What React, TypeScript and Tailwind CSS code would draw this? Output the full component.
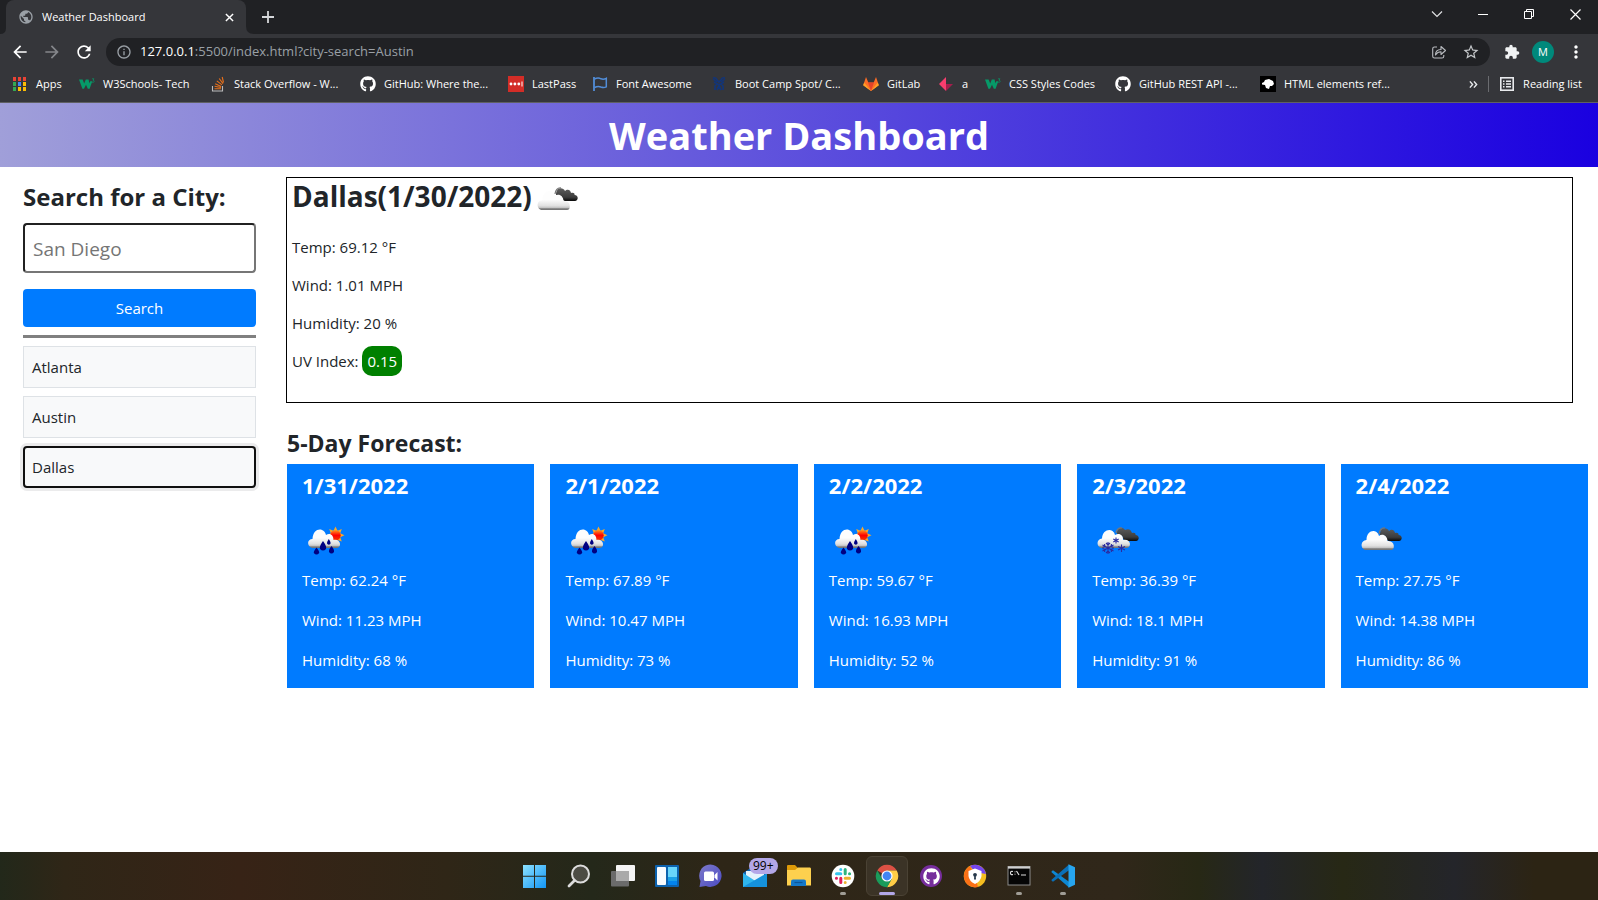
import type { ReactNode } from "react";
import {
  MdArrowBack,
  MdArrowForward,
  MdExtension,
  MdInfoOutline,
  MdMoreVert,
  MdPublic,
  MdRefresh,
  MdStarBorder,
} from "react-icons/md";
import { FaGithub } from "react-icons/fa";

/* ---------- bookmark icons ---------- */

const appColors = [
  "#ea4335", "#ea4335", "#ea4335",
  "#34a853", "#4285f4", "#fbbc05",
  "#34a853", "#fbbc05", "#fbbc05",
];

function AppsIcon() {
  return (
    <svg width="16" height="16" viewBox="0 0 16 16" aria-hidden="true">
      {appColors.map((color, i) => (
        <rect key={i} x={1 + (i % 3) * 5} y={1 + Math.floor(i / 3) * 5} width="3" height="4" fill={color} />
      ))}
    </svg>
  );
}

function W3Icon() {
  return (
    <svg width="16" height="16" viewBox="0 0 16 16" fill="none" aria-hidden="true">
      <path d="M0 3.500H3.600L5.200 7.600L6.800 3.500H9.600L10.300 7.200L11.300 5.200H13.300L10.600 12.800H8.800L7 8.800L5 12.800H3.400Z" fill="#069a68" />
      <path d="M13 2.800H15L14 4.200Q15.500 4.500 15.200 5.700Q14.400 6.700 13 6.100" stroke="#069a68" strokeWidth="0.700" />
    </svg>
  );
}

function StackIcon() {
  return (
    <svg width="16" height="16" viewBox="0 0 16 16" fill="none" aria-hidden="true">
      <path d="M2.500 10V15H12.500V10" stroke="#bcbbbb" strokeWidth="1.100" />
      <path d="M4.500 12.800H11M4.600 10.300L11 11.500M5.200 7.700L11.200 10.400M6.800 4.900L12 8.900M9.200 2.500L13 7.600M12.200 1L13.500 6.500" stroke="#e8701a" strokeWidth="1.100" />
    </svg>
  );
}

function LastPassIcon() {
  return (
    <svg width="16" height="16" viewBox="0 0 16 16" aria-hidden="true">
      <rect width="16" height="16" fill="#d32d27" />
      <circle cx="3" cy="8" r="1.400" fill="#fff" />
      <circle cx="6.900" cy="8" r="1.400" fill="#fff" />
      <circle cx="10.800" cy="8" r="1.400" fill="#fff" />
      <rect x="13.500" y="5.500" width="1" height="5" fill="#fff" />
    </svg>
  );
}

function FlagIcon() {
  return (
    <svg width="16" height="16" viewBox="0 0 16 16" fill="none" stroke="#528dd7" aria-hidden="true">
      <path d="M2 1V15" strokeWidth="1.800" />
      <path d="M2.500 3C5.500 1.500 7.500 2 9 2.800C11 3.600 13 3 14.300 2.300V10.800C12 12 10.500 11.600 8.800 11C6.500 10 4.500 10.600 2.500 11.500" strokeWidth="1.500" />
    </svg>
  );
}

function BootcampIcon() {
  return (
    <svg width="16" height="16" viewBox="0 0 16 16" fill="none" stroke="#133578" aria-hidden="true">
      <path d="M2 2Q5 1 6 4L8 6L10 4Q11 1 14 2M3 6L8 9L13 6M4 14V10L6 8M12 14V10L10 8M6 14L8 10L10 14" strokeWidth="1.700" />
      <path d="M2 3L6 6M14 3L10 6M6 12H10" strokeWidth="1.500" />
    </svg>
  );
}

function GitlabIcon() {
  return (
    <svg width="16" height="16" viewBox="0 0 16 16" aria-hidden="true">
      <path d="M8 15L0.200 9.200L3 1L5.300 6.500H10.700L13 1L15.800 9.200Z" fill="#fc6d26" />
      <path d="M8 15L5 6.500H11Z" fill="#e24329" />
      <path d="M8 15L0.200 9.200L1.200 6.500ZM8 15L15.800 9.200L14.800 6.500Z" fill="#fca326" />
    </svg>
  );
}

function PinkIcon() {
  return (
    <svg width="16" height="16" viewBox="0 0 16 16" aria-hidden="true">
      <path d="M8 1V15L1 8Z" fill="#f83e6e" />
      <path d="M8 8H15L8 15Z" fill="#a51e4d" />
    </svg>
  );
}

function HtmlRefIcon() {
  return (
    <svg width="16" height="16" viewBox="0 0 16 16" aria-hidden="true">
      <rect width="16" height="16" fill="#000" />
      <path d="M2 7L4 6L5 4L9 3L13 5L14 8L12 10H10L9 13L6 12L5 9L2 8.500Z" fill="#fff" />
    </svg>
  );
}

function ReadingIcon() {
  return (
    <svg width="16" height="16" viewBox="0 0 16 16" fill="none" stroke="#e8eaed" aria-hidden="true">
      <rect x="1.800" y="1.800" width="12.400" height="12.400" strokeWidth="1.600" />
      <path d="M4 5.200H5.500M7 5.200H12M4 8H5.500M7 8H12M4 10.800H5.500M7 10.800H12" strokeWidth="1.500" />
    </svg>
  );
}

type Bookmark = { label: string; icon: ReactNode; width: string };

const github = <FaGithub size={16} className="text-white" />;

const bookmarks: Bookmark[] = [
  { label: "Apps", icon: <AppsIcon />, width: "w-[67px]" },
  { label: "W3Schools- Tech", icon: <W3Icon />, width: "w-[131px]" },
  { label: "Stack Overflow - W...", icon: <StackIcon />, width: "w-[150px]" },
  { label: "GitHub: Where the...", icon: github, width: "w-[148px]" },
  { label: "LastPass", icon: <LastPassIcon />, width: "w-[84px]" },
  { label: "Font Awesome", icon: <FlagIcon />, width: "w-[119px]" },
  { label: "Boot Camp Spot/ C...", icon: <BootcampIcon />, width: "w-[152px]" },
  { label: "GitLab", icon: <GitlabIcon />, width: "w-[75px]" },
  { label: "a", icon: <PinkIcon />, width: "w-[47px]" },
  { label: "CSS Styles Codes", icon: <W3Icon />, width: "w-[130px]" },
  { label: "GitHub REST API -...", icon: github, width: "w-[145px]" },
  { label: "HTML elements ref...", icon: <HtmlRefIcon />, width: "w-[148px]" },
];

/* ---------- browser chrome ---------- */

function TabStrip() {
  return (
    <div className="flex h-[34px] items-stretch bg-[#202124]">
      <svg width="6" height="34" viewBox="0 0 6 34" aria-hidden="true">
        <path d="M6 28Q6 34 0 34H6Z" fill="#35363a" />
      </svg>
      <div className="flex w-60 items-center rounded-t-lg bg-[#35363a] pr-2 pl-3">
        <MdPublic size={16} className="text-[#9aa0a6]" />
        <span className="ml-2 flex-1 text-[11px] text-white">Weather Dashboard</span>
        <button aria-label="Close tab" className="p-1">
          <svg width="9" height="9" viewBox="0 0 10 10" stroke="#fff" strokeWidth="1.600" aria-hidden="true">
            <path d="M1 1L9 9M9 1L1 9" />
          </svg>
        </button>
      </div>
      <svg width="8" height="34" viewBox="0 0 8 34" aria-hidden="true">
        <path d="M0 26Q0 34 8 34H0Z" fill="#35363a" />
      </svg>
      <button aria-label="New tab" className="ml-2 flex items-center">
        <svg width="12" height="12" viewBox="0 0 12 12" stroke="#d5d7da" strokeWidth="1.800" aria-hidden="true">
          <path d="M6 0V12M0 6H12" />
        </svg>
      </button>
      <div className="ml-auto flex h-7">
        <button aria-label="Search tabs" className="flex w-[46px] items-center justify-center">
          <svg width="12" height="12" viewBox="0 0 12 12" fill="none" stroke="#e0e1e3" strokeWidth="1.200" aria-hidden="true">
            <path d="M1 3.500L6 8.500L11 3.500" />
          </svg>
        </button>
        <button aria-label="Minimize" className="flex w-[46px] items-center justify-center">
          <svg width="10" height="10" viewBox="0 0 10 10" fill="#fff" aria-hidden="true">
            <rect y="5" width="10" height="1" />
          </svg>
        </button>
        <button aria-label="Restore" className="flex w-[46px] items-center justify-center">
          <svg width="10" height="10" viewBox="0 0 10 10" fill="none" stroke="#fff" aria-hidden="true">
            <path d="M0.500 2.500H7.500V9.500H0.500ZM2.500 2.500V0.500H9.500V7.500H7.500" />
          </svg>
        </button>
        <button aria-label="Close" className="flex w-[46px] items-center justify-center">
          <svg width="11" height="11" viewBox="0 0 11 11" stroke="#fff" strokeWidth="1.200" aria-hidden="true">
            <path d="M0.500 0.500L10.500 10.500M10.500 0.500L0.500 10.500" />
          </svg>
        </button>
      </div>
    </div>
  );
}

function Toolbar() {
  return (
    <div className="flex h-9 items-center bg-[#35363a] pr-3 pl-2.5">
      <button aria-label="Back" className="text-white"><MdArrowBack size={20} /></button>
      <button aria-label="Forward" className="ml-3 text-[#85878b]"><MdArrowForward size={20} /></button>
      <button aria-label="Reload" className="ml-3 text-white"><MdRefresh size={20} /></button>
      <div className="ml-3 flex h-7 flex-1 items-center rounded-full bg-[#202124] pr-2.5 pl-2.5">
        <MdInfoOutline size={16} className="text-[#9aa0a6]" />
        <span className="ml-2 flex-1 text-[13px] text-[#9aa0a6]">
          <span className="text-white">127.0.0.1</span>:5500/index.html?city-search=Austin
        </span>
        <button aria-label="Share">
          <svg width="16" height="16" viewBox="0 0 16 16" fill="none" stroke="#b9bcc0" strokeWidth="1.100" aria-hidden="true">
            <path d="M6 3H3.500Q1.700 3 1.700 4.800V12.200Q1.700 14 3.500 14H11Q12.800 14 12.800 12.200V11" />
            <path d="M4.500 11Q4.500 5.500 10 5.500V2.500L14.500 6.500L10 10.500V7.800Q6.500 7.800 4.500 11Z" strokeLinejoin="round" />
          </svg>
        </button>
        <button aria-label="Bookmark this page" className="ml-[15px] text-[#c4c7ca]"><MdStarBorder size={18} /></button>
      </div>
      <button aria-label="Extensions" className="ml-3.5 text-[#f1f3f4]"><MdExtension size={16} /></button>
      <button aria-label="Profile" className="ml-3 size-[22px] rounded-full bg-[#00897b] text-[11px] leading-[22px] text-white">M</button>
      <button aria-label="Menu" className="ml-3 text-white"><MdMoreVert size={20} /></button>
    </div>
  );
}

function Bookmarks() {
  return (
    <nav className="flex h-[33px] items-center border-b border-[#5f6063] bg-[#35363a] pb-1 pl-3 text-[11px] text-white">
      {bookmarks.map((b, i) => (
        <a key={i} href="#" className={`flex shrink-0 items-center gap-2 whitespace-nowrap ${b.width}`}>
          <span className="flex w-4 justify-center">{b.icon}</span>
          {b.label}
        </a>
      ))}
      <button aria-label="More bookmarks" className="ml-auto">
        <svg width="9" height="9" viewBox="0 0 10 10" fill="none" stroke="#e8eaed" strokeWidth="1.600" aria-hidden="true">
          <path d="M1 1.500L4 5L1 8.500M5.500 1.500L8.500 5L5.500 8.500" />
        </svg>
      </button>
      <span className="ml-2.5 h-4 w-px bg-[#6b6c70]" />
      <a href="#" className="mr-4 ml-2.5 flex items-center gap-2">
        <ReadingIcon />
        Reading list
      </a>
    </nav>
  );
}

/* ---------- weather icons ---------- */

type Sky = "clouds" | "rain" | "snow";

function WeatherIcon({ sky, id }: { sky: Sky; id: string }) {
  const white = `${id}-white`;
  const dark = `${id}-dark`;
  const sun = `${id}-sun`;
  return (
    <svg width="50" height="50" viewBox="0 0 50 50" role="img" aria-label={sky}>
      <defs>
        <linearGradient id={white} x1="0" y1="0" x2="0" y2="1">
          <stop offset="0.450" stopColor="#fdfdfd" />
          <stop offset="0.780" stopColor="#e0e0e0" />
          <stop offset="0.900" stopColor="#bdbdbd" />
          <stop offset="0.930" stopColor="#777" />
          <stop offset="1" stopColor="#777" />
        </linearGradient>
        <linearGradient id={dark} x1="0" y1="0" x2="0" y2="1">
          <stop offset="0" stopColor="#5c5c5c" />
          <stop offset="0.700" stopColor="#3c3c3c" />
          <stop offset="1" stopColor="#080808" />
        </linearGradient>
        <linearGradient id={sun} x1="0" y1="0" x2="0" y2="1">
          <stop offset="0" stopColor="#ff9a1e" />
          <stop offset="0.500" stopColor="#f00" />
          <stop offset="1" stopColor="#f03a00" />
        </linearGradient>
      </defs>
      {sky === "clouds" && (
        <g>
          <path d="M24 20C24 12 31 12 33 16C36 13 39 16 39 18C42 17 43 19 42.500 20C47 20 46.500 26 43 26H33C31 26 30 23 29 21Z" fill={`url(#${dark})`} />
          <path d="M23 19Q24 12.500 29 13" fill="none" stroke="#777" strokeWidth="1.200" />
          <path d="M9 35C4 33 4.500 25.500 10.500 25C10.500 17 16.500 14.500 20.500 17Q22.500 18.500 23 21C26.500 18 31.500 21 31.500 26C39 25 39.500 35 35 35Z" fill={`url(#${white})`} />
        </g>
      )}
      {sky === "rain" && (
        <g>
          <path d="M33.500 11.500L35.500 15.700L39.800 14L38.200 18.300L42.500 20.300L38.200 22.300L39.800 26.600L35.500 24.900L33.500 29L31.500 24.900L27.200 26.600L28.800 22.300L24.500 20.300L28.800 18.300L27.200 14L31.500 15.700Z" fill="#f9a72b" />
          <circle cx="33.500" cy="20.300" r="5.200" fill={`url(#${sun})`} />
          <path d="M10 33C4.500 31 5 24 10.500 24C11 16 16 13.500 20 15Q23 16 24 20C28 17.500 31.500 20 31.500 25C39 23.500 40 32.500 35 33Z" fill={`url(#${white})`} />
          <path d="M14.500 32.500Q17.500 36 17.200 38Q14.500 41 11.800 38Q11.500 36 14.500 32.500ZM21 26Q25 31.500 24 34Q21 37 18 34Q17 31.500 21 26ZM29.500 31Q32.500 34.500 32 37Q29.500 40 27 37Q26.500 34.500 29.500 31ZM26.800 24Q29.300 27.500 28.300 29Q26.800 30.500 25.300 29Q24.300 27.500 26.800 24Z" fill="#000082" />
        </g>
      )}
      {sky === "snow" && (
        <g>
          <path d="M25 19C25 11 31 12 33 15C37 13 39 15 40 18C43 17 44 19 43.500 20C48 20 47.500 26 44 26H34C32 26 31 23 30 21Z" fill={`url(#${dark})`} />
          <path d="M24 18Q25 12.500 30 13" fill="none" stroke="#777" strokeWidth="1.200" />
          <path d="M9 33C4 31 4.500 24 10 23.500C10.500 16 16.500 13.500 20.500 16Q22.500 17.500 23 20C27.500 17.500 31.500 20.500 31 25C39.500 23.500 39.500 32.500 35 33Z" fill={`url(#${white})`} />
          <g stroke="#2b2ba0" fill="none">
            <path d="M16 27V39M10.500 30L21.500 36M21.500 30L10.500 36M14 28L16 30L18 28M14 38L16 36L18 38M10.500 32.500L13 31.500L12.500 29M21.500 33.500L19 34.500L19.500 37M19.500 29L19 31.500L21.500 32.500M12.500 37L13 34.500L10.500 33.500" strokeWidth="1.100" />
            <path d="M24 22.500V28.500M21.300 24L26.700 27M26.700 24L21.300 27M29.500 29.500V37M26 31.500L33 35M33 31.500L26 35" strokeWidth="1.100" />
          </g>
        </g>
      )}
    </svg>
  );
}

/* ---------- page ---------- */

const cities = ["Atlanta", "Austin", "Dallas"];

const forecast: { date: string; sky: Sky; temp: string; wind: string; humidity: string }[] = [
  { date: "1/31/2022", sky: "rain", temp: "62.24", wind: "11.23", humidity: "68" },
  { date: "2/1/2022", sky: "rain", temp: "67.89", wind: "10.47", humidity: "73" },
  { date: "2/2/2022", sky: "rain", temp: "59.67", wind: "16.93", humidity: "52" },
  { date: "2/3/2022", sky: "snow", temp: "36.39", wind: "18.1", humidity: "91" },
  { date: "2/4/2022", sky: "clouds", temp: "27.75", wind: "14.38", humidity: "86" },
];

function Sidebar() {
  return (
    <aside className="w-[233px] shrink-0 pt-3.5">
      <label htmlFor="city-search" className="block text-[24px] leading-8 font-bold">Search for a City:</label>
      <input
        id="city-search"
        type="text"
        placeholder="San Diego"
        className="mt-2.5 block h-[50px] w-full rounded border-2 border-t-[#212121] border-r-[#767676] border-b-[#767676] border-l-[#212121] px-2 pt-0.5 text-[19px] placeholder:text-[#757575]"
      />
      <button className="mt-4 block h-[38px] w-full rounded bg-[#007bff] text-[15px] text-white">Search</button>
      <hr className="mt-2 border-t-[3px] border-[#808080]" />
      <div className="mt-2 flex flex-col gap-2">
        {cities.map((city) => (
          <button
            key={city}
            className={
              city === "Dallas"
                ? "h-[42px] rounded border-2 border-[#101010] bg-[#f8f9fa] px-[7px] text-left text-[15px] ring-3 ring-[#ebebec]"
                : "h-[42px] border border-[#dee2e6] bg-[#f8f9fa] px-2 text-left text-[15px]"
            }
          >
            {city}
          </button>
        ))}
      </div>
    </aside>
  );
}

function Today() {
  return (
    <section className="mr-[15px] -ml-px h-[226px] border border-black pl-[5px] text-[15px] leading-[22px]">
      <h2 className="flex h-9 items-center text-[28px] font-bold">
        Dallas(1/30/2022)
        <span className="flex h-9 items-center pt-2">
          <WeatherIcon sky="clouds" id="today" />
        </span>
      </h2>
      <div className="mt-[22px] flex flex-col gap-4">
        <p>Temp: 69.12 °F</p>
        <p>Wind: 1.01 MPH</p>
        <p>Humidity: 20 %</p>
        <p>
          UV Index: <span className="rounded-[10px] bg-[#008000] px-[5px] py-[5px] text-white">0.15</span>
        </p>
      </div>
    </section>
  );
}

/* ---------- taskbar ---------- */

function TaskIcon({ children }: { children: ReactNode }) {
  return (
    <svg width="24" height="24" viewBox="0 0 24 24" fill="none" aria-hidden="true">{children}</svg>
  );
}

const tasks: { name: string; icon: ReactNode; state?: "open" | "active"; badge?: string }[] = [
  {
    name: "Start",
    icon: (
      <TaskIcon>
        <defs>
          <linearGradient id="win" x1="0" y1="0" x2="24" y2="24" gradientUnits="userSpaceOnUse">
            <stop stopColor="#8fe3ff" />
            <stop offset="1" stopColor="#0f93f5" />
          </linearGradient>
        </defs>
        <path d="M0 1H11V11.800H0ZM12 1H23V11.800H12ZM0 12.800H11V24H0ZM12 12.800H23V24H12Z" fill="url(#win)" />
      </TaskIcon>
    ),
  },
  {
    name: "Search",
    icon: (
      <TaskIcon>
        <circle cx="13.500" cy="10" r="8.500" fill="#4c4c44" stroke="#dcdcdc" strokeWidth="2" />
        <path d="M7.500 16.500L2 22" stroke="#dcdcdc" strokeWidth="2.800" strokeLinecap="round" />
      </TaskIcon>
    ),
  },
  {
    name: "Task view",
    icon: (
      <TaskIcon>
        <rect x="5" y="1" width="19" height="16" rx="1" fill="#f4f4f4" />
        <rect x="0" y="7" width="18" height="15.500" rx="1" fill="#6b6b6b" />
        <rect x="5" y="7" width="13" height="10" fill="#aaa" />
      </TaskIcon>
    ),
  },
  {
    name: "Widgets",
    icon: (
      <TaskIcon>
        <rect x="0" y="1" width="24" height="22" rx="1" fill="#0c62ae" />
        <rect x="2" y="3" width="9" height="18" rx="1" fill="#f7fbff" />
        <rect x="13" y="3" width="9" height="10" fill="#68d5fb" />
        <rect x="13" y="13" width="9" height="4" fill="#1ba1e8" />
        <rect x="13" y="17" width="9" height="4" fill="#0384ee" />
      </TaskIcon>
    ),
  },
  {
    name: "Chat",
    icon: (
      <TaskIcon>
        <defs>
          <linearGradient id="chat" x1="0" y1="0" x2="1" y2="1">
            <stop stopColor="#7d79c9" />
            <stop offset="1" stopColor="#4b4bc4" />
          </linearGradient>
        </defs>
        <path d="M0.500 23L1.500 17A11.200 11.200 0 1 1 7 22Z" fill="url(#chat)" />
        <rect x="5" y="7.500" width="10" height="9.500" rx="1.500" fill="#fff" />
        <path d="M15.500 11L18.500 8V16.500L15.500 13.500Z" fill="#fff" />
      </TaskIcon>
    ),
  },
  {
    name: "Mail",
    badge: "99+",
    icon: (
      <TaskIcon>
        <path d="M0 9L12 1L24 9V23H0Z" fill="#0f65b5" />
        <path d="M3 7H21V16L12 18L3 12Z" fill="#e4f2fb" />
        <path d="M0 9L14 18L24 23H0Z" fill="#2fb6ee" />
        <path d="M24 9L0 23H24Z" fill="#1592dc" />
      </TaskIcon>
    ),
  },
  {
    name: "File Explorer",
    icon: (
      <TaskIcon>
        <path d="M0 2Q0 1 1 1H8L11 4H23V12H0Z" fill="#dd9a08" />
        <path d="M0 6H8L11 3.500H23Q24 3.500 24 5V21.500H0Z" fill="#fdd04e" />
        <path d="M4 22V17.500Q4 15.500 6 15.500H17Q19 15.500 19 17.500V22Z" fill="#1478c9" />
        <path d="M7.500 18.500H15.500" stroke="#0c5597" strokeWidth="1.200" />
      </TaskIcon>
    ),
  },
  {
    name: "Slack",
    state: "open",
    icon: (
      <TaskIcon>
        <circle cx="12" cy="12" r="11.300" fill="#fff" />
        <g strokeWidth="3" strokeLinecap="round">
          <path d="M5.500 9.800H9.800M9.800 5.400V5.500" stroke="#36c5f0" />
          <path d="M14.200 5.500V9.800M18.500 9.800H18.600" stroke="#2eb67d" />
          <path d="M14.200 14.200H18.500M14.200 18.500V18.600" stroke="#ecb22e" />
          <path d="M9.800 14.200V18.500M5.400 14.200H5.500" stroke="#e01e5a" />
        </g>
      </TaskIcon>
    ),
  },
  {
    name: "Chrome",
    state: "active",
    icon: (
      <TaskIcon>
        <path d="M12 12L2.300 6.400A11.200 11.200 0 0 1 21.700 6.400H12Z" fill="#dd5144" />
        <path d="M12 6.400H21.700A11.200 11.200 0 0 1 12 23.200L16.800 14.800Z" fill="#ffcd46" />
        <path d="M2.300 6.400L7.200 14.800L12 17.600L16.800 14.800L12 23.200A11.200 11.200 0 0 1 2.300 6.400Z" fill="#1a9b5b" />
        <circle cx="12" cy="12" r="5.600" fill="#fff" />
        <circle cx="12" cy="12" r="4.400" fill="#4285f4" />
      </TaskIcon>
    ),
  },
  {
    name: "GitHub Desktop",
    icon: (
      <span className="flex size-[22px] items-center justify-center rounded-full bg-[#762d9c]">
        <FaGithub size={17} className="text-white" />
      </span>
    ),
  },
  {
    name: "Secure browser",
    icon: (
      <TaskIcon>
        <circle cx="12" cy="12" r="11.200" fill="#f5bd20" />
        <path d="M1 14A11.200 11.200 0 0 1 7 2L12 12L15 23A11.200 11.200 0 0 1 1 14Z" fill="#fb7117" />
        <path d="M7 2A11.200 11.200 0 0 1 23 10L12 8Z" fill="#7545f0" />
        <path d="M12 4.500L18.500 7V12Q18 17 12 20Q6 17 5.500 12V7Z" fill="#fff" />
        <circle cx="12" cy="10.800" r="1.900" fill="#26384a" />
        <path d="M11.300 11H12.700L13 15.500H11Z" fill="#26384a" />
      </TaskIcon>
    ),
  },
  {
    name: "Command Prompt",
    state: "open",
    icon: (
      <TaskIcon>
        <rect x="1" y="2.500" width="22" height="18.500" fill="#050505" stroke="#8c8c8c" />
        <path d="M1 3.500H23" stroke="#d0d0d0" strokeWidth="2.200" />
        <path d="M6 7.500Q3.500 6.800 3.500 9T6 10.500M8 7.500V8.300M8 9.800V10.600M9.500 7L12 11M14 11H19" stroke="#ddd" strokeWidth="1.200" />
      </TaskIcon>
    ),
  },
  {
    name: "Visual Studio Code",
    state: "open",
    icon: (
      <TaskIcon>
        <path d="M2 6.300L18 17.800V23.500L0.500 8.300Q0 7.300 2 6.300Z" fill="#0d87d3" />
        <path d="M2 17.700L18 6.200V0.500L0.500 15.700Q0 16.700 2 17.700Z" fill="#0a70b8" />
        <path d="M17.500 0.200L24 3.300V20.700L17.500 23.800Z" fill="#27a5ef" />
      </TaskIcon>
    ),
  },
];

function Taskbar() {
  return (
    <footer className="flex h-12 items-center justify-center bg-[linear-gradient(to_right,#22281a_0%,#2f2617_4%,#372316_15%,#2f2617_28%,#24281a_37%,#2e2617_45%,#30271a_70%,#272815_75%,#23252a_79%,#272815_84%,#24252a_91%,#2c2414_96%)]">
      {tasks.map((t) => (
        <button
          key={t.name}
          aria-label={t.name}
          className={
            t.state === "active"
              ? "relative mx-px flex h-10 w-[42px] items-center justify-center rounded-md border border-[#4a4234] bg-[#3b3326]"
              : "relative flex h-10 w-11 items-center justify-center"
          }
        >
          {t.icon}
          {t.badge && (
            <span className="absolute top-0.5 left-4 rounded-full bg-[#b3a7e8] px-1 text-[12px] leading-4 text-black">{t.badge}</span>
          )}
          {t.state === "open" && <span className="absolute bottom-px h-[3px] w-1.5 rounded-full bg-[#a09d96]" />}
          {t.state === "active" && <span className="absolute bottom-0 h-[3px] w-4 rounded-full bg-[#b3a7e8]" />}
        </button>
      ))}
    </footer>
  );
}

export default function App() {
  return (
    <div className="flex min-h-screen flex-col bg-white font-['Open_Sans','Noto_Sans',sans-serif] text-[#212529]">
      <TabStrip />
      <Toolbar />
      <Bookmarks />
      <header className="bg-[linear-gradient(to_right,#a09fd9,#1a00e0)] text-center text-white">
        <h1 className="text-[38px] leading-[64px] font-bold">Weather Dashboard</h1>
      </header>
      <main className="flex flex-1 gap-[31px] pr-2.5 pl-[23px]">
        <Sidebar />
        <div className="min-w-0 flex-1 pt-2.5">
          <Today />
          <h2 className="mt-[23px] mb-1 text-[23px] leading-[34px] font-bold">5-Day Forecast:</h2>
          <div className="grid grid-cols-5 gap-4">
            {forecast.map((day) => (
              <article key={day.date} className="bg-[#007bff] px-[15px] pt-[5px] pb-4 text-[15px] leading-6 text-white">
                <h3 className="text-[22px] leading-8 font-bold">{day.date}</h3>
                <div className="mt-3.5">
                  <WeatherIcon sky={day.sky} id={day.date.replaceAll("/", "-")} />
                </div>
                <div className="mt-[3px] flex flex-col gap-4">
                  <p>Temp: {day.temp} °F</p>
                  <p>Wind: {day.wind} MPH</p>
                  <p>Humidity: {day.humidity} %</p>
                </div>
              </article>
            ))}
          </div>
        </div>
      </main>
      <Taskbar />
    </div>
  );
}
